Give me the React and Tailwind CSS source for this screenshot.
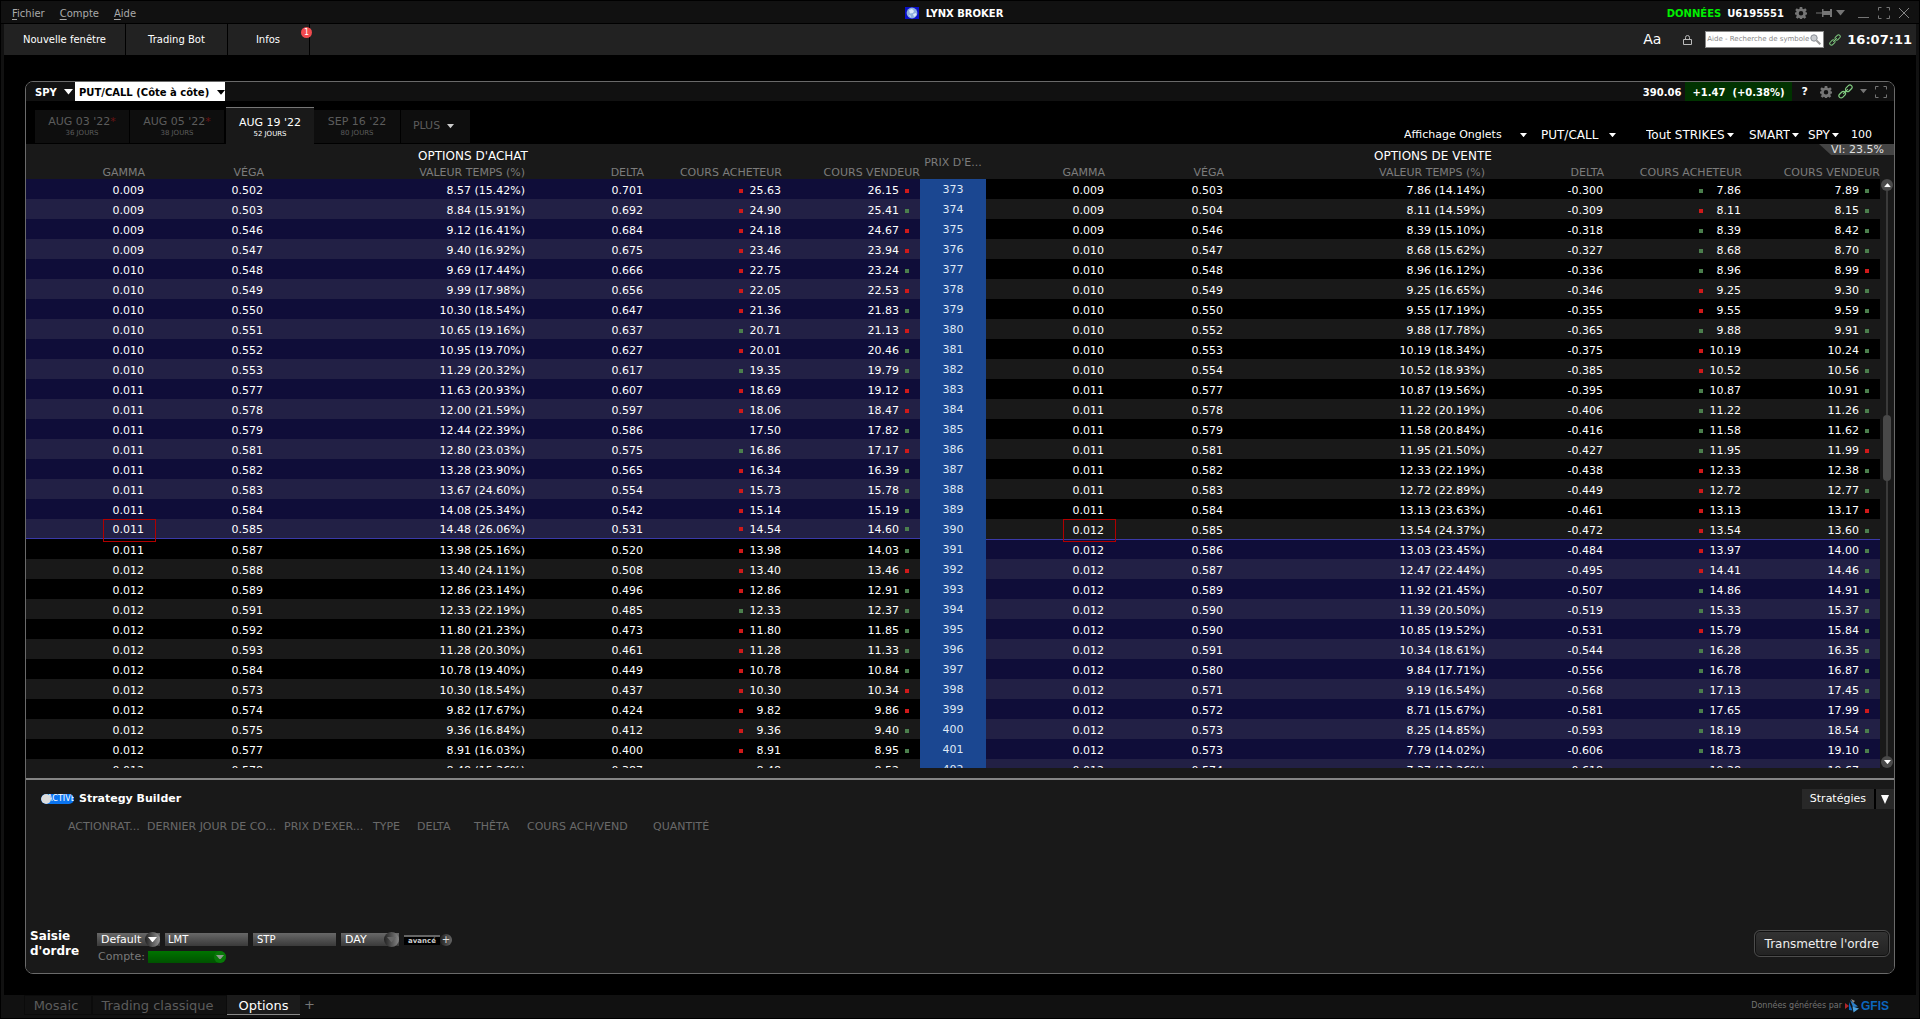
import { useState } from 'react';
import { clsx } from 'clsx';

// gamma, vega, time value, delta, bid tick, bid, ask, ask tick
const CHAIN = [
  [373, ['0.009', '0.502', '8.57 (15.42%)', '0.701', 'r', '25.63', '26.15', 'r'], ['0.009', '0.503', '7.86 (14.14%)', '-0.300', 'g', '7.86', '7.89', 'g']],
  [374, ['0.009', '0.503', '8.84 (15.91%)', '0.692', 'r', '24.90', '25.41', 'g'], ['0.009', '0.504', '8.11 (14.59%)', '-0.309', 'r', '8.11', '8.15', 'g']],
  [375, ['0.009', '0.546', '9.12 (16.41%)', '0.684', 'r', '24.18', '24.67', 'r'], ['0.009', '0.546', '8.39 (15.10%)', '-0.318', 'g', '8.39', '8.42', 'g']],
  [376, ['0.009', '0.547', '9.40 (16.92%)', '0.675', 'r', '23.46', '23.94', 'r'], ['0.010', '0.547', '8.68 (15.62%)', '-0.327', 'g', '8.68', '8.70', 'g']],
  [377, ['0.010', '0.548', '9.69 (17.44%)', '0.666', 'r', '22.75', '23.24', 'g'], ['0.010', '0.548', '8.96 (16.12%)', '-0.336', 'g', '8.96', '8.99', 'r']],
  [378, ['0.010', '0.549', '9.99 (17.98%)', '0.656', 'r', '22.05', '22.53', 'r'], ['0.010', '0.549', '9.25 (16.65%)', '-0.346', 'r', '9.25', '9.30', 'g']],
  [379, ['0.010', '0.550', '10.30 (18.54%)', '0.647', 'r', '21.36', '21.83', 'g'], ['0.010', '0.550', '9.55 (17.19%)', '-0.355', 'r', '9.55', '9.59', 'g']],
  [380, ['0.010', '0.551', '10.65 (19.16%)', '0.637', 'g', '20.71', '21.13', 'r'], ['0.010', '0.552', '9.88 (17.78%)', '-0.365', 'g', '9.88', '9.91', 'g']],
  [381, ['0.010', '0.552', '10.95 (19.70%)', '0.627', 'r', '20.01', '20.46', 'g'], ['0.010', '0.553', '10.19 (18.34%)', '-0.375', 'r', '10.19', '10.24', 'g']],
  [382, ['0.010', '0.553', '11.29 (20.32%)', '0.617', 'g', '19.35', '19.79', 'g'], ['0.010', '0.554', '10.52 (18.93%)', '-0.385', 'r', '10.52', '10.56', 'g']],
  [383, ['0.011', '0.577', '11.63 (20.93%)', '0.607', 'r', '18.69', '19.12', 'r'], ['0.011', '0.577', '10.87 (19.56%)', '-0.395', 'g', '10.87', '10.91', 'g']],
  [384, ['0.011', '0.578', '12.00 (21.59%)', '0.597', 'r', '18.06', '18.47', 'r'], ['0.011', '0.578', '11.22 (20.19%)', '-0.406', 'g', '11.22', '11.26', 'g']],
  [385, ['0.011', '0.579', '12.44 (22.39%)', '0.586', '', '17.50', '17.82', 'g'], ['0.011', '0.579', '11.58 (20.84%)', '-0.416', 'g', '11.58', '11.62', 'g']],
  [386, ['0.011', '0.581', '12.80 (23.03%)', '0.575', 'g', '16.86', '17.17', 'r'], ['0.011', '0.581', '11.95 (21.50%)', '-0.427', 'g', '11.95', '11.99', 'r']],
  [387, ['0.011', '0.582', '13.28 (23.90%)', '0.565', 'r', '16.34', '16.39', 'g'], ['0.011', '0.582', '12.33 (22.19%)', '-0.438', 'r', '12.33', '12.38', 'g']],
  [388, ['0.011', '0.583', '13.67 (24.60%)', '0.554', 'r', '15.73', '15.78', 'g'], ['0.011', '0.583', '12.72 (22.89%)', '-0.449', 'r', '12.72', '12.77', 'g']],
  [389, ['0.011', '0.584', '14.08 (25.34%)', '0.542', 'r', '15.14', '15.19', 'g'], ['0.011', '0.584', '13.13 (23.63%)', '-0.461', 'r', '13.13', '13.17', 'r']],
  [390, ['0.011', '0.585', '14.48 (26.06%)', '0.531', 'r', '14.54', '14.60', 'g'], ['0.012', '0.585', '13.54 (24.37%)', '-0.472', 'r', '13.54', '13.60', 'g']],
  [391, ['0.011', '0.587', '13.98 (25.16%)', '0.520', 'r', '13.98', '14.03', 'g'], ['0.012', '0.586', '13.03 (23.45%)', '-0.484', 'r', '13.97', '14.00', 'g']],
  [392, ['0.012', '0.588', '13.40 (24.11%)', '0.508', 'r', '13.40', '13.46', 'r'], ['0.012', '0.587', '12.47 (22.44%)', '-0.495', 'r', '14.41', '14.46', 'g']],
  [393, ['0.012', '0.589', '12.86 (23.14%)', '0.496', 'r', '12.86', '12.91', 'g'], ['0.012', '0.589', '11.92 (21.45%)', '-0.507', 'g', '14.86', '14.91', 'g']],
  [394, ['0.012', '0.591', '12.33 (22.19%)', '0.485', 'g', '12.33', '12.37', 'g'], ['0.012', '0.590', '11.39 (20.50%)', '-0.519', 'g', '15.33', '15.37', 'g']],
  [395, ['0.012', '0.592', '11.80 (21.23%)', '0.473', 'r', '11.80', '11.85', 'g'], ['0.012', '0.590', '10.85 (19.52%)', '-0.531', 'r', '15.79', '15.84', 'g']],
  [396, ['0.012', '0.593', '11.28 (20.30%)', '0.461', 'r', '11.28', '11.33', 'g'], ['0.012', '0.591', '10.34 (18.61%)', '-0.544', 'g', '16.28', '16.35', 'g']],
  [397, ['0.012', '0.584', '10.78 (19.40%)', '0.449', 'r', '10.78', '10.84', 'g'], ['0.012', '0.580', '9.84 (17.71%)', '-0.556', 'g', '16.78', '16.87', 'g']],
  [398, ['0.012', '0.573', '10.30 (18.54%)', '0.437', 'r', '10.30', '10.34', 'r'], ['0.012', '0.571', '9.19 (16.54%)', '-0.568', 'g', '17.13', '17.45', 'g']],
  [399, ['0.012', '0.574', '9.82 (17.67%)', '0.424', 'r', '9.82', '9.86', 'r'], ['0.012', '0.572', '8.71 (15.67%)', '-0.581', 'g', '17.65', '17.99', 'r']],
  [400, ['0.012', '0.575', '9.36 (16.84%)', '0.412', 'r', '9.36', '9.40', 'g'], ['0.012', '0.573', '8.25 (14.85%)', '-0.593', 'g', '18.19', '18.54', 'g']],
  [401, ['0.012', '0.577', '8.91 (16.03%)', '0.400', 'r', '8.91', '8.95', 'g'], ['0.012', '0.573', '7.79 (14.02%)', '-0.606', 'g', '18.73', '19.10', 'g']],
  [402, ['0.012', '0.578', '8.48 (15.26%)', '0.387', '', '8.48', '8.52', ''], ['0.012', '0.574', '7.37 (13.26%)', '-0.618', '', '19.28', '19.67', '']],
];

const SPOT = 390.06;

const COLUMNS = ['GAMMA', 'VÉGA', 'VALEUR TEMPS (%)', 'DELTA', 'COURS ACHETEUR', 'COURS VENDEUR'];

const EXPIRIES = [
  { date: "AUG 03 '22", days: '36 JOURS', weekly: true, width: 'w-[94px]' },
  { date: "AUG 05 '22", days: '38 JOURS', weekly: true, width: 'w-[94px]' },
  { date: "AUG 19 '22", days: '52 JOURS', width: 'w-[88px]' },
  { date: "SEP 16 '22", days: '80 JOURS', width: 'w-[86px]' },
];

const LEG_COLUMNS = [
  ['ACTIONRAT...', 'w-[79px]'],
  ['DERNIER JOUR DE CO...', 'w-[137px]'],
  ["PRIX D'EXER...", 'w-[89px]'],
  ['TYPE', 'w-[44px]'],
  ['DELTA', 'w-[57px]'],
  ['THÊTA', 'w-[53px]'],
  ['COURS ACH/VEND', 'w-[126px]'],
  ['QUANTITÉ', 'w-[70px]'],
];

const Caret = ({ className = 'w-2' }) => (
  <svg viewBox="0 0 10 6" className={clsx('shrink-0 fill-current', className)} aria-hidden="true">
    <path d="M0 0h10L5 6z" />
  </svg>
);

const Gear = ({ className }) => (
  <svg viewBox="0 0 24 24" className={clsx('fill-current', className)} aria-hidden="true">
    <path
      fillRule="evenodd"
      d="M9.5 0h5l.5 3.5 2.5 1L20.500 2.500l3 3.500-2.500 3 .5 1.500L24 11v4l-2.500.5-1 2.500 2 2.500-3.500 3-2.500-2-2 1-.5 1.500h-4L9.500 22.500l-2-1-2.500 2-3.500-3 2-2.500-1-2.500L0 15v-4l2.500-.5L3 9 .5 6l3-3.500L6.500 4.500l2.500-1zM12 8a4.500 4.500 0 1 0 0 9 4.500 4.500 0 0 0 0-9z"
    />
  </svg>
);

const Corners = ({ className }) => (
  <svg viewBox="0 0 12 12" className={clsx('fill-none stroke-current', className)} aria-hidden="true">
    <path d="M.5 3.500v-3h3M8.500.5h3v3M11.500 8.500v3h-3M3.500 11.500h-3v-3" />
  </svg>
);

const Chain = ({ className }) => (
  <svg viewBox="0 0 16 16" className={clsx('fill-none stroke-[#7fc97f]', className)} strokeWidth="1.3" aria-hidden="true">
    <rect x="7.5" y="2.3" width="8" height="4.6" rx="2.3" transform="rotate(-45 11.5 4.6)" />
    <rect x="0.5" y="9.1" width="8" height="4.6" rx="2.3" transform="rotate(-45 4.5 11.4)" />
    <path d="M5.500 10.500l5-5" />
  </svg>
);

const Dropdown = ({ label, value, className, caret = 'w-[7px]' }) => (
  <span className={clsx('flex items-center', className)}>
    <select aria-label={label} className="appearance-none bg-transparent outline-none">
      <option>{value}</option>
    </select>
    <Caret className={caret} />
  </span>
);

const Tick = ({ dir }) => (
  <span className={clsx('size-1 shrink-0', dir === 'r' && 'bg-[#d01a1a]', dir === 'g' && 'bg-[#4b7f4d]')} />
);

const SideCells = ({ quote, bg, edge, boxed }) => {
  const [gamma, vega, time, delta, bidTick, bid, ask, askTick] = quote;
  const cell = clsx('text-right', bg, edge || 'pt-[3px]');
  return (
    <>
      <td className={clsx(cell, 'relative pr-px')}>
        {gamma}
        {boxed && <span className="absolute -right-[11px] top-0 z-10 h-[23px] w-[53px] border border-[#b00000]" />}
      </td>
      <td className={clsx(cell, 'pr-px')}>{vega}</td>
      <td className={cell}>{time}</td>
      <td className={clsx(cell, 'pr-px')}>{delta}</td>
      <td className={clsx(cell, 'pr-px')}>
        <span className="flex items-center justify-end">
          <Tick dir={bidTick} />
          <span className="w-[38px]">{bid}</span>
        </span>
      </td>
      <td className={cell}>
        <span className="flex items-center justify-end gap-[6px] pr-[11px]">
          {ask}
          <Tick dir={askTick} />
        </span>
      </td>
    </>
  );
};

const OptionChain = () => (
  <div className="relative flex min-h-0 flex-1 bg-[#191919] pb-[10px]">
    <div className="min-w-0 flex-1 overflow-hidden">
      <table className="w-full table-fixed border-separate border-spacing-0 text-[11px] text-white">
        <colgroup>
          <col className="w-[6.42%]" />
          <col className="w-[6.42%]" />
          <col className="w-[14.08%]" />
          <col className="w-[6.42%]" />
          <col className="w-[7.44%]" />
          <col className="w-[7.44%]" />
          <col className="w-[3.56%]" />
          <col className="w-[6.42%]" />
          <col className="w-[6.42%]" />
          <col className="w-[14.08%]" />
          <col className="w-[6.42%]" />
          <col className="w-[7.44%]" />
          <col className="w-[7.44%]" />
        </colgroup>
        <thead>
          <tr className="h-5 leading-4">
            <th colSpan={6} className="pt-1 text-[12px] font-medium">OPTIONS D'ACHAT</th>
            <th rowSpan={2} className="whitespace-nowrap pt-[2px] font-normal text-[#7c7c7c]">PRIX D'E...</th>
            <th colSpan={6} className="pt-1 text-[12px] font-medium">OPTIONS DE VENTE</th>
          </tr>
          <tr className="h-[15px] leading-[13px] text-[#7c7c7c]">
            {[...COLUMNS, ...COLUMNS].map((name, i) => (
              <th key={i} className="whitespace-nowrap pt-[2px] text-right font-normal">{name}</th>
            ))}
          </tr>
        </thead>
        <tbody>
          {CHAIN.map(([strike, call, put], i) => {
            const odd = i % 2 === 1;
            const itm = odd ? 'bg-[#222045]' : 'bg-[#0f0d39]';
            const otm = odd ? 'bg-[#191919]' : 'bg-black';
            const callItm = strike < SPOT;
            return (
              <tr key={strike} className="h-5 leading-[17px]">
                <SideCells quote={call} bg={callItm ? itm : otm} edge={strike === 390 && 'border-b border-[#3a39a8] pt-px'} boxed={strike === 390} />
                <td className="bg-[#1b4791] pt-px text-center text-[#dfe8f5]">{strike}</td>
                <SideCells quote={put} bg={callItm ? otm : itm} edge={strike === 391 && 'border-t border-[#3a39a8] pt-[2px]'} boxed={strike === 390} />
              </tr>
            );
          })}
        </tbody>
      </table>
    </div>

    <div className="flex w-[14px] flex-col items-center pt-[35px]">
      <button aria-label="Défiler vers le haut" className="flex size-3 items-center justify-center rounded-full bg-[#4a4a4a] text-white">
        <Caret className="w-[7px] rotate-180" />
      </button>
      <span className="w-[2px] flex-[223] bg-[#3a3a3a]" />
      <span className="w-2 flex-[66] rounded-full bg-[#494949]" />
      <span className="w-[2px] flex-[274] bg-[#3a3a3a]" />
      <button aria-label="Défiler vers le bas" className="flex size-3 items-center justify-center rounded-full bg-[#4a4a4a] text-white">
        <Caret className="w-[7px]" />
      </button>
    </div>

    <div className="absolute right-0 top-0 flex h-[11px] items-center bg-[#444] pl-3 pr-[10px] text-[11px] leading-[11px] text-[#e0e0e0] [clip-path:polygon(0_0,100%_0,100%_100%,12px_100%)]">
      VI: 23.5%
    </div>
  </div>
);

const ExpiryTabs = () => {
  const [active, setActive] = useState("AUG 19 '22");
  return (
    <div className="flex h-[43px] shrink-0 items-end justify-between bg-black text-[11px] text-white">
      <div className="flex items-end pl-[9px]">
        {EXPIRIES.map((tab) => {
          const on = tab.date === active;
          return (
            <button
              key={tab.date}
              onClick={() => setActive(tab.date)}
              className={clsx(
                'flex flex-col items-center',
                tab.width,
                on ? 'ml-px h-[37px] border-t border-[#777] bg-[#191919] pt-2 text-white' : 'mr-px h-[34px] border-b border-black bg-[#0e0e0e] pt-[5px] text-[#5c5c5c]',
              )}
            >
              <span className="leading-[14px]">
                {tab.date}
                {tab.weekly && <span className="text-[#6a1414]">*</span>}
              </span>
              <span className="text-[7px] leading-[9px]">{tab.days}</span>
            </button>
          );
        })}
        <button className="flex h-[34px] w-[69px] items-center justify-center gap-[7px] border-b border-black bg-[#0e0e0e] pr-1 text-[#5c5c5c]">
          PLUS
          <Caret className="w-[7px] text-[#ccc]" />
        </button>
      </div>
      <div className="flex h-[18px] items-center pr-[22px]">
        <Dropdown label="Affichage" value="Affichage Onglets" className="gap-[18px]" />
        <div className="flex text-[12px]">
          <Dropdown label="Type d'option" value="PUT/CALL" className="ml-[14px] gap-[10px]" />
          <Dropdown label="Strikes" value="Tout STRIKES" className="ml-[30px] gap-[2px]" />
          <Dropdown label="Bourse" value="SMART" className="ml-[15px] gap-[2px]" />
          <Dropdown label="Classe" value="SPY" className="ml-[9px] gap-[2px]" />
        </div>
        <span className="ml-[12px]">100</span>
      </div>
    </div>
  );
};

const PanelHeader = () => (
  <div className="flex h-[19px] shrink-0 items-center justify-between bg-[#111] text-[10px] font-bold text-white">
    <div className="flex h-full items-center">
      <Dropdown label="Symbole" value="SPY" className="gap-[7px] pl-[9px] pt-px" caret="w-[9px]" />
      <Dropdown label="Disposition" value="PUT/CALL (Côte à côte)" className="ml-[2px] h-full gap-[7px] bg-white pl-1 pt-[2px] text-black" caret="w-2" />
    </div>
    <div className="flex h-full items-center pr-[7px]">
      <span className="pr-[4px] pt-px">390.06</span>
      <span className="flex h-full items-center whitespace-pre bg-[#003300] px-[7px] pt-px">+1.47  (+0.38%)</span>
      <button aria-label="Aide" className="ml-[10px] pt-px text-[11px]">?</button>
      <button aria-label="Configurer" className="ml-[12px] text-[#757575]"><Gear className="size-3" /></button>
      <button aria-label="Grouper" className="ml-[6px]"><Chain className="size-[15px]" /></button>
      <button aria-label="Menu du groupe" className="ml-[7px] text-[#757575]"><Caret className="w-[7px]" /></button>
      <button aria-label="Agrandir le panneau" className="ml-[8px] text-[#757575]"><Corners className="size-3" /></button>
    </div>
  </div>
);

const FieldSelect = ({ label, value, className, children }) => (
  <span className={clsx('flex h-[13px] items-center bg-linear-to-b from-[#686868] to-[#3a3a3a]', className)}>
    <select aria-label={label} className="min-w-0 flex-1 appearance-none bg-transparent leading-[13px] text-white outline-none">
      <option>{value}</option>
    </select>
    {children}
  </span>
);

const StrategyBuilder = () => (
  <div className="shrink-0 border-t-2 border-[#858585] bg-[#191919] pb-[10px] text-[11px]">
    <div className="flex items-center justify-between pt-[9px]">
      <label className="flex items-center gap-[5px] pl-[15px] font-bold text-white">
        <input type="checkbox" defaultChecked className="sr-only" />
        <span className="relative h-[10px] w-[33px] overflow-hidden rounded-full bg-[#0a74f0] pl-[6px] text-[8px] font-normal leading-[10px]">
          ACTIVÉ
          <span className="absolute left-0 top-0 size-[10px] rounded-full bg-[#dcdcdc]" />
        </span>
        Strategy Builder
      </label>
      <div className="flex h-5 bg-black text-white">
        <button className="bg-[#282828] px-2">Stratégies</button>
        <button aria-label="Liste des stratégies" className="ml-[2px] flex w-[18px] items-center justify-center bg-[#282828]">
          <svg viewBox="0 0 8 9" className="w-2 fill-white"><path d="M0 0h8L4 9z" /></svg>
        </button>
      </div>
    </div>

    <table className="ml-[42px] mt-[8px] table-fixed text-left text-[#6a6a6a]">
      <thead>
        <tr>
          {LEG_COLUMNS.map(([name, width]) => (
            <th key={name} className={clsx('whitespace-nowrap p-0 font-normal leading-5', width)}>{name}</th>
          ))}
        </tr>
      </thead>
    </table>

    <div className="mt-[92px] flex items-start justify-between pl-1 pr-[4px]">
      <div className="flex">
        <p className="w-[67px] text-[12px] font-bold leading-[15px] text-white">
          Saisie
          <br />
          d'ordre
        </p>
        <div className="pt-[4px]">
          <div className="flex h-[13px] items-center">
            <FieldSelect label="Préréglage" value="Default" className="w-[63px] pl-1">
              <span className="flex size-[15px] items-center justify-center rounded-full bg-linear-to-r from-[#222] to-[#999]">
                <Caret className="w-[9px] text-white" />
              </span>
            </FieldSelect>
            <FieldSelect label="Type d'ordre" value="LMT" className="ml-[5px] w-[83px] pl-[3px] text-[10px]" />
            <FieldSelect label="Type de stop" value="STP" className="ml-[5px] w-[83px] pl-1 text-[10px]" />
            <FieldSelect label="Validité" value="DAY" className="ml-[5px] w-[58px] pl-1">
              <span className="flex size-[15px] items-center justify-center rounded-full bg-linear-to-r from-[#222] to-[#888]">
                <Caret className="w-[9px] text-[#666]" />
              </span>
            </FieldSelect>
            <button className="ml-[5px] flex items-center">
              <span className="h-[10px] border-t-2 border-[#666] bg-black px-1 text-[7px] font-bold leading-[8px] text-[#ccc]">avancé</span>
              <span className="flex size-3 items-center justify-center rounded-full bg-linear-to-r from-[#222] to-[#666] text-[10px] leading-none text-[#ddd]">+</span>
            </button>
          </div>
          <label className="mt-[5px] flex h-3 items-center pl-px text-[#7a7a7a]">
            Compte:
            <span className="ml-[3px] flex h-3 w-[78px] items-center justify-end rounded-r-full bg-linear-to-b from-[#007400] to-[#005200]">
              <select className="min-w-0 flex-1 appearance-none bg-transparent outline-none" />
              <span className="flex size-3 items-center justify-center rounded-full bg-[#087808]">
                <Caret className="w-2 text-[#8c9a8c]" />
              </span>
            </span>
          </label>
        </div>
      </div>
      <button className="mt-[1px] h-[27px] rounded-md border border-[#4c4c4c] bg-linear-to-b from-[#333] to-[#222] px-[10px] text-[12px] text-[#eee] shadow-[inset_0_0_0_1px_#111]">
        Transmettre l'ordre
      </button>
    </div>
  </div>
);

const TitleBar = () => (
  <header className="grid h-[23px] shrink-0 grid-cols-[1fr_auto_1fr] items-center border-b border-black pt-[2px] text-[10px]">
    <nav className="flex gap-[15px] pl-[11px] text-[#aaa]">
      <button><u className="underline-offset-2">F</u>ichier</button>
      <button><u className="underline-offset-2">C</u>ompte</button>
      <button><u className="underline-offset-2">A</u>ide</button>
    </nav>
    <div className="flex items-center gap-[7px] pr-3 font-bold text-white">
      <svg viewBox="0 0 14 12" className="h-3 w-[14px]" aria-hidden="true">
        <rect width="14" height="12" fill="#0a10c8" />
        <circle cx="7" cy="6" r="5.4" fill="#8fb0dc" />
        <path d="M4 3l3-1 2 2-1 2-3 .5zM8 7l3-1 .5 2L9 10zM3.500 8l2 .5.5 2z" fill="#dbe8f8" />
      </svg>
      LYNX BROKER
    </div>
    <div className="flex items-center justify-end pr-[9px] font-bold text-white">
      <span className="text-[#00f000]">DONNÉES</span>
      <span className="ml-[6px]">U6195551</span>
      <button aria-label="Paramètres" className="ml-[11px] text-[#757575]"><Gear className="size-3" /></button>
      <button aria-label="Épingler" className="ml-[9px] text-[#757575]">
        <svg viewBox="0 0 16 8" className="w-4 fill-current"><path d="M0 3.500h6v1H0zM6 0h1.500v2H14V0h2v8h-2V6H7.500v2H6z" /></svg>
      </button>
      <button aria-label="Options d'épinglage" className="ml-[4px] text-[#757575]"><Caret className="w-[9px]" /></button>
      <button aria-label="Réduire" className="ml-[13px] mt-[8px] h-px w-[11px] bg-[#757575]" />
      <button aria-label="Agrandir" className="ml-[9px] text-[#757575]"><Corners className="size-3" /></button>
      <button aria-label="Fermer" className="ml-[8px] text-[#858585]">
        <svg viewBox="0 0 12 12" className="size-3 fill-none stroke-current"><path d="M1 1l10 10M11 1L1 11" /></svg>
      </button>
    </div>
  </header>
);

const Toolbar = () => (
  <div className="mx-[3px] flex h-[31px] shrink-0 items-center justify-between bg-[#222] text-[10px] text-white">
    <div className="flex h-full">
      <button className="w-[122px] border-r border-black">Nouvelle fenêtre</button>
      <button className="w-[102px] border-r border-black">Trading Bot</button>
      <button className="relative w-[82px] border-r border-black pr-px">
        Infos
        <span className="absolute -right-[3px] top-[3px] flex size-[11px] items-center justify-center rounded-full bg-[#f04a4e] text-[8px] leading-none">1</span>
      </button>
    </div>
    <div className="flex items-center pr-[4px]">
      <button aria-label="Taille du texte" className="text-[14px]">Aa</button>
      <button aria-label="Verrouiller" className="ml-[22px]">
        <svg viewBox="0 0 9 10" className="h-[10px] w-[9px] fill-none stroke-[#bbb]"><path d="M.5 4.500h8v5h-8zM2.500 4.500v-2a2 2 0 0 1 4 0v2" /></svg>
      </button>
      <label className="ml-[13px] flex h-[17px] w-[119px] items-center border border-[#888] bg-white pl-px pr-[2px]">
        <input aria-label="Recherche" placeholder="Aide - Recherche de symbole" className="w-0 flex-1 text-[7px] text-black outline-none placeholder:text-[#888]" />
        <svg viewBox="0 0 11 11" className="size-[11px] fill-none" aria-hidden="true">
          <circle cx="4" cy="4" r="3.2" fill="#c9ccd0" stroke="#8a8f96" />
          <path d="M6.500 6.500l3.800 3.800" stroke="#9a9a9a" strokeWidth="2" />
        </svg>
      </label>
      <Chain className="ml-[5px] size-3" />
      <span className="ml-[6px] text-[13px] font-bold">16:07:11</span>
    </div>
  </div>
);

const Footer = () => (
  <footer className="flex h-[23px] shrink-0 items-start justify-between text-[13px]">
    <div className="flex h-5 pl-[23px]">
      <button className="w-[68px] border border-[#0b0b0b] pr-1 text-[#5c5c5c]">Mosaic</button>
      <button className="w-[135px] border border-[#0b0b0b] pr-1 text-[#5c5c5c]">Trading classique</button>
      <button className="w-[73px] border-b border-[#888] bg-[#1b1b1b] pt-px text-white">Options</button>
      <button aria-label="Ajouter un onglet" className="pl-[4px] text-[#777]">+</button>
    </div>
    <div className="flex h-5 items-center gap-[3px] pr-[30px] pt-px text-[8px] text-[#747474]">
      Données générées par
      <a href="#gfis" className="flex items-center gap-[2px] font-['Liberation_Sans',sans-serif] text-[12px] font-bold leading-none text-[#0c66bd]">
        <svg viewBox="0 0 14 14" className="size-[14px]" aria-hidden="true">
          <path d="M0 4l4 3-4 3z" fill="#b3262b" />
          <path d="M5 1l8 6.500L8 8z" fill="#2b7fc9" />
          <path d="M4 3l3.500 8.500L4 11z" fill="#0c66bd" />
          <path d="M7.500 7.500l6.500 2-5.500 4z" fill="#4a9fdc" />
          <path d="M6 0l4 2-2 2z" fill="#8a8a8a" />
        </svg>
        GFIS
      </a>
    </div>
  </footer>
);

const App = () => (
  <div className="h-screen bg-black p-px font-['DejaVu_Sans',Verdana,sans-serif]">
    <div className="flex h-full flex-col bg-[#111]">
      <TitleBar />
      <Toolbar />
      <main className="mx-[3px] flex min-h-0 flex-1 flex-col bg-black px-[21px] pb-[21px] pt-[26px]">
        <section className="flex min-h-0 flex-1 flex-col overflow-hidden rounded-lg border border-[#6a6a6a]">
          <PanelHeader />
          <ExpiryTabs />
          <OptionChain />
          <StrategyBuilder />
        </section>
      </main>
      <Footer />
    </div>
  </div>
);

export default App;
